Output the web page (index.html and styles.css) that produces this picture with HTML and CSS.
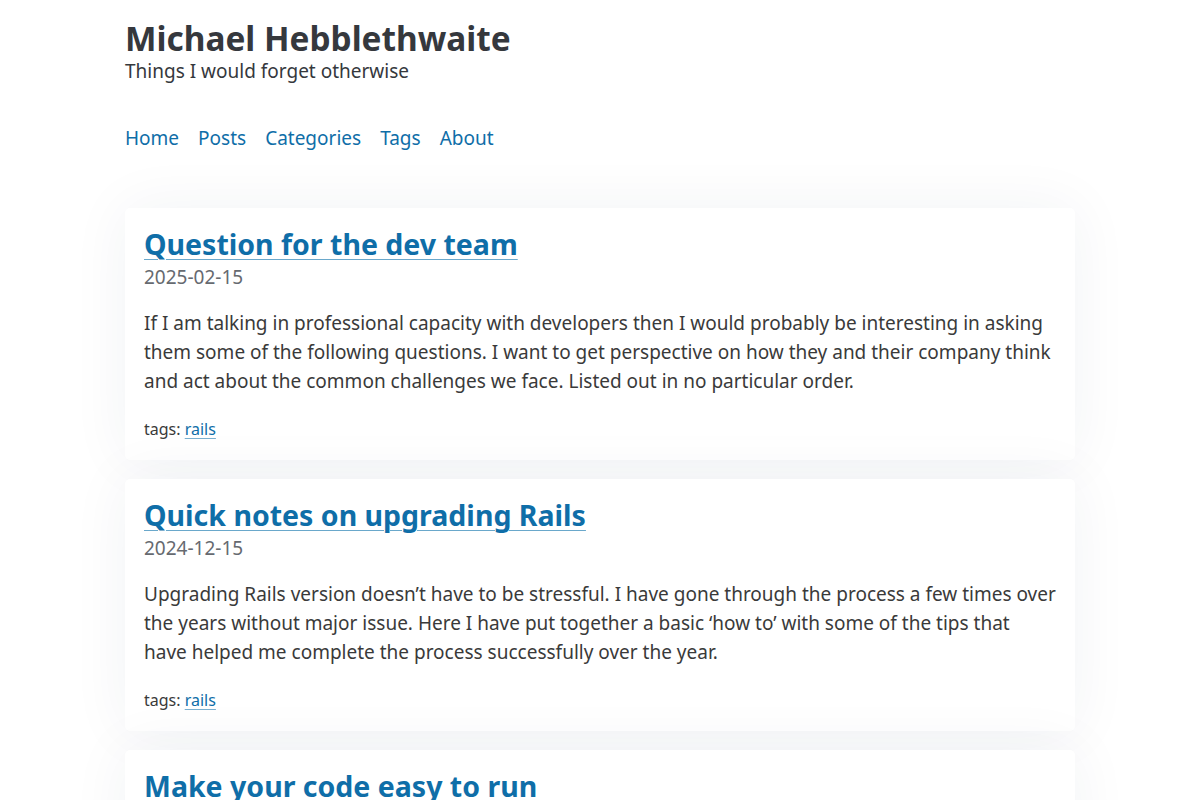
FILE: index.html
```html
<!DOCTYPE html>
<html lang="en">
<head>
<meta charset="utf-8">
<title>Michael Hebblethwaite</title>
<link rel="stylesheet" href="styles.css">
</head>
<body>
<div class="wrap">
  <header class="site-header">
    <h1 class="site-title">Michael Hebblethwaite</h1>
    <p class="site-tagline">Things I would forget otherwise</p>
    <nav class="site-nav">
      <a href="#">Home</a>
      <a href="#">Posts</a>
      <a href="#">Categories</a>
      <a href="#">Tags</a>
      <a href="#">About</a>
    </nav>
  </header>
  <main class="posts">
    <article class="card">
      <h2 class="card-title"><a href="#">Question for the dev team</a></h2>
      <div class="card-date">2025-02-15</div>
      <p class="card-summary">If I am talking in professional capacity with developers then I would probably be interesting in asking them some of the following questions. I want to get perspective on how they and their company think and act about the common challenges we face. Listed out in no particular order.</p>
      <div class="card-tags">tags: <a href="#">rails</a></div>
    </article>
    <article class="card">
      <h2 class="card-title"><a href="#">Quick notes on upgrading Rails</a></h2>
      <div class="card-date">2024-12-15</div>
      <p class="card-summary">Upgrading Rails version doesn’t have to be stressful. I have gone through the process a few times over the years without major issue. Here I have put together a basic ‘how to’ with some of the tips that have helped me complete the process successfully over the year.</p>
      <div class="card-tags">tags: <a href="#">rails</a></div>
    </article>
    <article class="card">
      <h2 class="card-title"><a href="#">Make your code easy to run</a></h2>
      <div class="card-date">2024-10-02</div>
      <p class="card-summary">Making it simple for anyone to get your code running locally saves time for everyone on the team.</p>
      <div class="card-tags">tags: <a href="#">rails</a></div>
    </article>
  </main>
</div>
</body>
</html>
```
FILE: styles.css
```css
* { box-sizing: border-box; }
html, body { margin: 0; padding: 0; }
body {
  background: #ffffff;
  font-family: "Noto Sans", "DejaVu Sans", sans-serif;
  color: #3a3a3a;
}
.wrap {
  width: 950px;
  margin: 0 auto;
}
.site-header {
  padding-top: 18px;
}
.site-title {
  margin: 0;
  font-size: 33.4px;
  line-height: 40px;
  font-weight: 700;
  color: #35383d;
}
.site-tagline {
  margin: 0;
  font-size: 19px;
  line-height: 26px;
  color: #35383d;
}
.site-nav {
  display: flex;
  gap: 19px;
  margin-top: 42px;
  font-size: 19px;
  line-height: 24px;
}
.site-nav a {
  color: #0f6ea8;
  text-decoration: none;
}
.posts {
  display: flex;
  flex-direction: column;
  gap: 19px;
  margin-top: 58px;
}
.card {
  background: #fff;
  border-radius: 5px;
  box-shadow: 0 0 60px rgba(30, 50, 80, 0.06);
  padding: 18px 19px 20px;
}
.card-title {
  margin: 0;
  font-size: 28.5px;
  line-height: 36px;
  font-weight: 700;
}
.card-title a {
  color: #0f6ea8;
  text-decoration: underline;
  text-decoration-color: #6aa8cb;
  text-decoration-thickness: 1px;
  text-underline-offset: 4px;
}
.card-date {
  margin-top: 2px;
  font-size: 19px;
  line-height: 26px;
  color: #666a70;
}
.card-summary {
  margin: 19px 0 0;
  font-size: 19px;
  line-height: 29px;
  color: #3a3a3a;
}
.card-tags {
  margin-top: 22px;
  font-size: 16px;
  line-height: 22px;
  color: #3a3a3a;
}
.card-tags a {
  color: #0f6ea8;
  text-decoration: underline;
  text-underline-offset: 3px;
  text-decoration-color: #7ab0d0;
}
```
